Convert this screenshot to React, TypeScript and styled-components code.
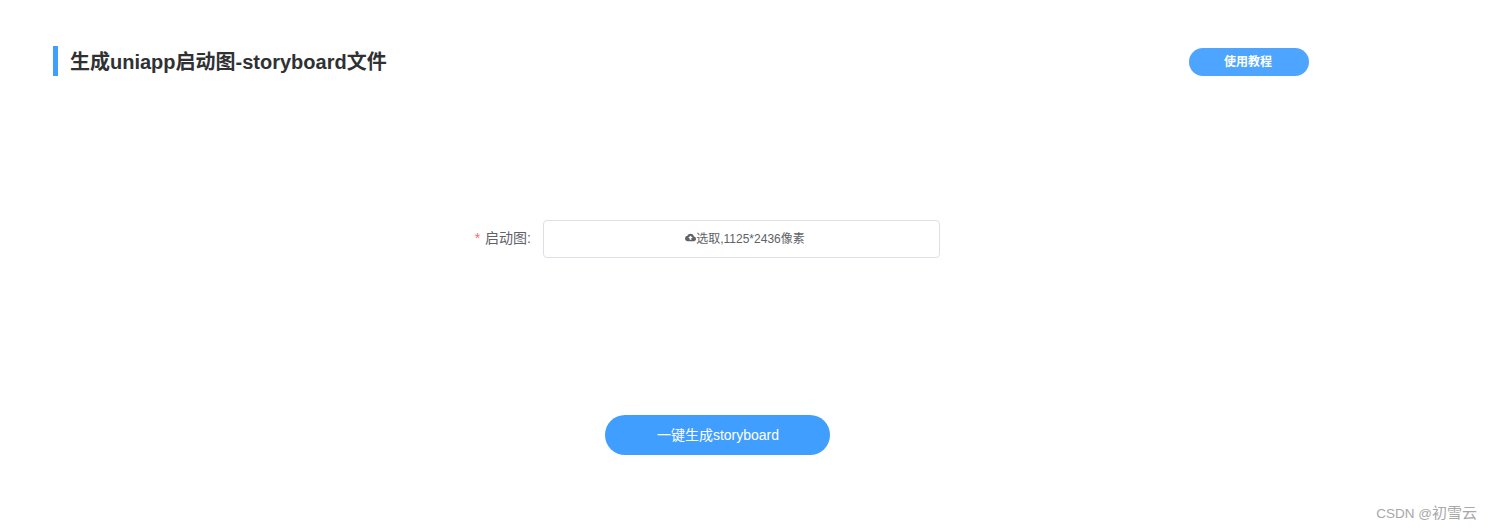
import React from "react";
import styled, { createGlobalStyle } from "styled-components";
import { MdCloudUpload } from "react-icons/md";

const FONT = `"Liberation Sans", "Noto Sans CJK SC", sans-serif`;

const GlobalStyle = createGlobalStyle`
  html, body {
    margin: 0;
    padding: 0;
    background: #fff;
    font-family: ${FONT};
  }
`;

const Page = styled.div`
  position: relative;
  box-sizing: border-box;
  width: 1491px;
  height: 529px;
  padding: 46px 182px 0 53px;
  overflow: hidden;
`;

const Header = styled.header`
  display: flex;
  align-items: flex-end;
  justify-content: space-between;
  height: 30px;
`;

const Title = styled.h1`
  margin: 0;
  height: 30px;
  padding-left: 12px;
  border-left: 5px solid #409eff;
  font-size: 20px;
  font-weight: 700;
  line-height: 32px;
  color: #303133;
`;

const HelpButton = styled.button`
  width: 120px;
  height: 28px;
  padding: 0 2px 3px 0;
  border: 0;
  border-radius: 14px;
  background: #4ea5ff;
  color: #fff;
  font-family: ${FONT};
  font-size: 12px;
  font-weight: 700;
`;

const FormRow = styled.div`
  display: flex;
  align-items: center;
  gap: 12px;
  margin-top: 144px;
`;

const Label = styled.label`
  width: 478px;
  padding-bottom: 5px;
  text-align: right;
  font-size: 14px;
  color: #606266;
`;

const Required = styled.span`
  margin-right: 5px;
  color: #f56c6c;
`;

const UploadBox = styled.div`
  box-sizing: border-box;
  display: flex;
  align-items: center;
  justify-content: center;
  width: 397px;
  height: 38px;
  padding: 0 0 3px 7px;
  border: 1px solid #dcdfe6;
  border-radius: 4px;
  font-size: 12px;
  color: #606266;
`;

const UploadIcon = styled(MdCloudUpload)`
  width: 11px;
  height: 11px;
  flex: none;
  color: #606266;
`;

const SubmitButton = styled.button`
  display: block;
  width: 225px;
  height: 40px;
  margin: 157px 0 0 552px;
  padding: 0 0 2px 1px;
  border: 0;
  border-radius: 20px;
  background: #409eff;
  color: #fff;
  font-family: ${FONT};
  font-size: 14px;
`;

const Watermark = styled.div`
  position: absolute;
  right: 14px;
  bottom: 7px;
  font-size: 13.5px;
  color: #a8a8a8;
`;

const WatermarkName = styled.span`
  font-size: 15px;
`;

const App = () => {
  return (
    <Page>
      <GlobalStyle />
      <Header>
        <Title>生成uniapp启动图-storyboard文件</Title>
        <HelpButton>使用教程</HelpButton>
      </Header>

      <FormRow>
        <Label>
          <Required>*</Required>启动图:
        </Label>
        <UploadBox>
          <UploadIcon />
          选取,1125*2436像素
        </UploadBox>
      </FormRow>

      <SubmitButton>一键生成storyboard</SubmitButton>
      <Watermark>
        CSDN @<WatermarkName>初雪云</WatermarkName>
      </Watermark>
    </Page>
  );
};

export default App;
